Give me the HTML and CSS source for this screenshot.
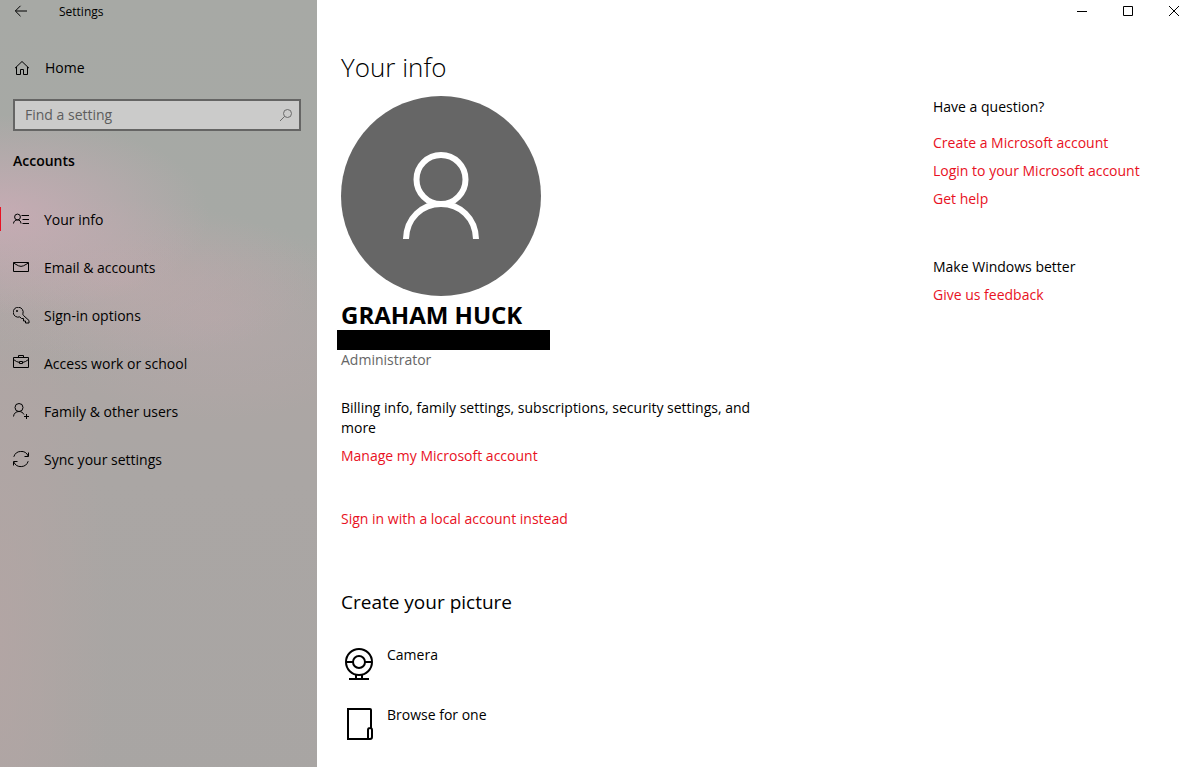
FILE: index.html
```html
<!DOCTYPE html>
<html lang="en">
<head>
<meta charset="utf-8">
<meta name="viewport" content="width=device-width, initial-scale=1">
<title>Settings</title>
<link rel="stylesheet" href="styles.css">
</head>
<body>
<div class="window">
  <div class="sidebar">
    <header class="titlebar">
      <button class="back" type="button" aria-label="Back">
        <svg width="14" height="12" viewBox="0 0 14 12"><path d="M13 6H1.500M6.500 .8L1.300 6l5.200 5.200"/></svg>
      </button>
      <span>Settings</span>
    </header>
    <a class="nav-link home" href="#home">
      <svg width="18" height="16" viewBox="0 0 18 16"><path d="M2 8.200L9 1.500l7 6.700M3.500 7v7.500h4v-5h3v5h4V7"/></svg>
      <span>Home</span>
    </a>
    <form class="search">
      <input type="search" aria-label="Find a setting" placeholder="Find a setting">
      <button type="button" aria-label="Search">
        <svg width="14" height="14" viewBox="0 0 14 14"><circle cx="8.500" cy="5.500" r="4"/><path d="M5.600 8.400L1 13"/></svg>
      </button>
    </form>
    <h2 class="section">Accounts</h2>
    <nav class="nav">
      <a class="nav-link active" href="#info" aria-current="page">
        <svg width="17" height="18" viewBox="0 0 17 18"><circle cx="4.500" cy="6" r="2.900"/><path d="M.5 12.500c.2-2.300 1.800-3.600 4-3.600s3.300 1.300 3.500 3.600M8.500 4.500H16M9.500 8.500H16M9.500 12.500H16"/></svg>
        <span>Your info</span>
      </a>
      <a class="nav-link" href="#email">
        <svg width="17" height="18" viewBox="0 0 17 18"><path d="M.5 3.500h15v9H.5zM.5 4l5 2.800q2.500 1.200 5 0l5-2.800"/></svg>
        <span>Email &amp; accounts</span>
      </a>
      <a class="nav-link" href="#signin">
        <svg width="17" height="18" viewBox="0 0 17 18"><path d="M6.800 9.900A5 5 0 1 1 9.900 6.800q-.2 1 .6 1.700L16 13.500V16h-3.500v-2h-2v-2.500h-2z"/><circle class="fill" cx="4" cy="4" r="1"/></svg>
        <span>Sign-in options</span>
      </a>
      <a class="nav-link" href="#work">
        <svg width="17" height="18" viewBox="0 0 17 18"><path d="M.5 2.500h15v10H.5zM5.500 2.500v-2h5v2M.5 4.500q3 2.500 6 3M15.500 4.500q-3 2.500-6 3M6.500 6.500h3v2h-3z"/></svg>
        <span>Access work or school</span>
      </a>
      <a class="nav-link" href="#family">
        <svg width="17" height="18" viewBox="0 0 17 18"><circle cx="6" cy="4.500" r="4"/><path d="M.5 13.500c.3-3.200 2.500-5 5.500-5 2.300 0 4.100 1.200 5 3M13.500 11v5M11 13.500h5"/></svg>
        <span>Family &amp; other users</span>
      </a>
      <a class="nav-link" href="#sync">
        <svg width="17" height="18" viewBox="0 0 17 18"><path d="M.8 5.800A7.700 7.700 0 0 1 15.200 5M15.500 1.500v4h-4M15.200 10.200A7.700 7.700 0 0 1 .8 11M.5 14.500v-4h4"/></svg>
        <span>Sync your settings</span>
      </a>
    </nav>
  </div>

  <div class="content">
    <div class="controls">
      <button type="button" aria-label="Minimize"><svg width="10" height="10" viewBox="0 0 10 10"><path d="M0 5.500h10"/></svg></button>
      <button type="button" aria-label="Maximize"><svg width="10" height="10" viewBox="0 0 10 10"><path d="M.5 .5h9v9h-9z"/></svg></button>
      <button type="button" aria-label="Close"><svg width="10" height="10" viewBox="0 0 10 10"><path d="M0 0l10 10M10 0L0 10"/></svg></button>
    </div>
    <div class="columns">
      <main class="main">
        <h1>Your info</h1>
        <svg class="avatar" viewBox="0 0 200 200" role="img" aria-label="Profile picture"><circle class="disc" cx="100" cy="100" r="100"/><circle cx="100" cy="83.500" r="24.500"/><path d="M65 143C65.500 122 81 108 100 108s34.500 14 35 35"/></svg>
        <p class="name">GRAHAM HUCK</p>
        <div class="redacted"></div>
        <p class="role">Administrator</p>
        <p class="billing">Billing info, family settings, subscriptions, security settings, and more</p>
        <a class="link manage" href="#manage">Manage my Microsoft account</a>
        <a class="link local" href="#local">Sign in with a local account instead</a>
        <h2>Create your picture</h2>
        <button class="source" type="button">
          <svg width="36" height="38" viewBox="0 0 36 38"><circle cx="18" cy="17" r="13"/><circle cx="18" cy="17" r="6"/><path d="M5 17h7M24 17h7M15 30v4M21 30v4M8 34h20"/></svg>
          <span>Camera</span>
        </button>
        <button class="source" type="button">
          <svg width="36" height="38" viewBox="0 0 36 38"><path d="M27 34H7V4h22q1 0 1 1v18M27 34v-9q0-2 2-2t2 2v7q0 2-2 2z"/></svg>
          <span>Browse for one</span>
        </button>
      </main>
      <aside class="help">
        <h3>Have a question?</h3>
        <div class="links first">
          <a class="link" href="#create">Create a Microsoft account</a>
          <a class="link" href="#login">Login to your Microsoft account</a>
          <a class="link" href="#help">Get help</a>
        </div>
        <h3>Make Windows better</h3>
        <div class="links">
          <a class="link" href="#feedback">Give us feedback</a>
        </div>
      </aside>
    </div>
  </div>
</div>
</body>
</html>
```
FILE: styles.css
```css
* { box-sizing: border-box; }

body {
  margin: 0;
  font: 14px/20px "Open Sans", "Noto Sans", sans-serif;
  color: #000;
  background: #fff;
}

h1, h2, h3, p { margin: 0; font-weight: 400; }
h3 { font-size: 14px; }
a { color: inherit; text-decoration: none; }
button { padding: 0; border: 0; background: none; font: inherit; color: inherit; }
svg { display: block; flex: none; fill: none; stroke: #000; }
.fill { fill: #000; stroke: none; }

.window { display: flex; min-height: 100vh; }

.sidebar {
  flex: none;
  width: 317px;
  background:
    radial-gradient(ellipse 210px 100px at 0 215px, rgba(206, 172, 183, .8), transparent),
    radial-gradient(ellipse 200px 80px at 120px 280px, rgba(192, 169, 172, .6), transparent),
    radial-gradient(ellipse 180px 100px at 215px 320px, rgba(184, 167, 170, .6), transparent),
    radial-gradient(ellipse 110px 460px at 0 640px, rgba(179, 165, 164, .9), transparent),
    linear-gradient(#a7a9a5 0, #a6a9a5 240px, #aca6a4 390px, #aaa6a4 480px, #a8a5a3 100%);
}

.titlebar {
  display: flex;
  align-items: center;
  gap: 31px;
  height: 24px;
  padding-left: 14px;
  font-size: 12px;
}
.back { padding-bottom: 2px; }

.nav-link {
  display: flex;
  align-items: center;
  gap: 14px;
  height: 48px;
  padding-left: 13px;
}
.home { margin-top: 20px; }

.search {
  display: flex;
  align-items: center;
  height: 32px;
  margin: 7px 16px 0 13px;
  padding: 0 6px 0 10px;
  border: 2px solid #656564;
  background: #cbcbca;
}
.search input {
  flex: 1;
  min-width: 0;
  padding: 0;
  border: 0;
  outline: 0;
  background: none;
  font: inherit;
}
.search input::placeholder { color: #5d5d5d; opacity: 1; }
.search svg { stroke: #6a6a6a; }

.section {
  margin: 20px 0 25px 13px;
  font-size: 14px;
  font-weight: 600;
}

.active { position: relative; }
.active::before {
  content: "";
  position: absolute;
  left: 0;
  top: 11px;
  width: 1px;
  height: 24px;
  background: #e81123;
}

.content { flex: 1; min-width: 0; }

.controls {
  display: flex;
  justify-content: flex-end;
  gap: 26px;
  height: 22px;
  padding-right: 8px;
}
.controls button { display: grid; place-items: center; width: 20px; }

.columns {
  display: flex;
  justify-content: space-between;
  padding: 25px 24px 24px;
}
.main { flex: 0 1 420px; }

h1 { font-size: 26px; line-height: 40px; font-weight: 300; }
.avatar { width: 200px; height: 200px; margin-top: 9px; stroke: #fff; stroke-width: 6; }
.disc { fill: #666; stroke: none; }
.name { padding-top: 4px; font-size: 24px; line-height: 30px; font-weight: 700; }
.redacted { width: 213px; height: 20px; margin-left: -4px; background: #000; }
.role { color: #666; }
.billing { margin-top: 28px; }
.link { display: block; width: fit-content; color: #e81123; }
.manage { margin-top: 8px; }
.local { margin-top: 43px; }
.main h2 { margin: 59px 0 29px; font-size: 19px; line-height: 28px; }

.source {
  display: flex;
  gap: 10px;
  height: 60px;
  text-align: left;
}
.source svg { stroke-width: 2; }

.help { flex: none; width: 235px; padding-top: 50px; }
.links { display: grid; gap: 8px; margin-top: 8px; }
.first { margin: 16px 0 48px; }
```
